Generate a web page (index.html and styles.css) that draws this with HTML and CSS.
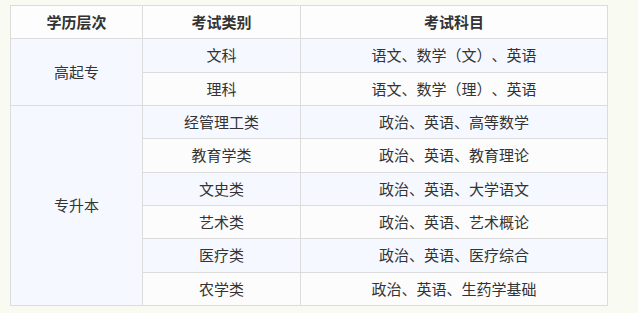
FILE: index.html
```html
<!DOCTYPE html>
<html lang="zh">
<head>
<meta charset="utf-8">
<link rel="stylesheet" href="styles.css">
</head>
<body>
<table class="exam">
  <colgroup>
    <col class="c1"><col class="c2"><col class="c3">
  </colgroup>
  <thead>
    <tr><th>学历层次</th><th>考试类别</th><th>考试科目</th></tr>
  </thead>
  <tbody>
    <tr class="alt"><td rowspan="2">高起专</td><td>文科</td><td>语文、数学（文）、英语</td></tr>
    <tr><td>理科</td><td>语文、数学（理）、英语</td></tr>
    <tr class="alt"><td rowspan="6">专升本</td><td>经管理工类</td><td>政治、英语、高等数学</td></tr>
    <tr><td>教育学类</td><td>政治、英语、教育理论</td></tr>
    <tr class="alt"><td>文史类</td><td>政治、英语、大学语文</td></tr>
    <tr><td>艺术类</td><td>政治、英语、艺术概论</td></tr>
    <tr class="alt"><td>医疗类</td><td>政治、英语、医疗综合</td></tr>
    <tr><td>农学类</td><td>政治、英语、生药学基础</td></tr>
  </tbody>
</table>
</body>
</html>
```
FILE: styles.css
```css
html, body {
  margin: 0;
  background: #f9fbf3;
}
body {
  padding: 5px 0 0 10px;
  font-family: "Noto Sans CJK SC", "Noto Sans", sans-serif;
  font-size: 15px;
  color: #333;
  text-spacing-trim: space-all;
  font-kerning: none;
  font-feature-settings: "palt" 0, "halt" 0, "chws" 0;
}
.exam {
  border-collapse: collapse;
  width: 597px;
  table-layout: fixed;
}
.c1 { width: 132px; }
.c2 { width: 158px; }
.c3 { width: 307px; }
.exam th, .exam td {
  border: 1px solid #dcdcdc;
  text-align: center;
  vertical-align: middle;
  padding: 0;
  height: 32.33px;
  line-height: 20px;
  background: #fcfcfd;
}
.exam th {
  font-weight: bold;
  background: #fdfdfd;
}
.exam tr.alt td {
  background: #f5f9ff;
}
```
